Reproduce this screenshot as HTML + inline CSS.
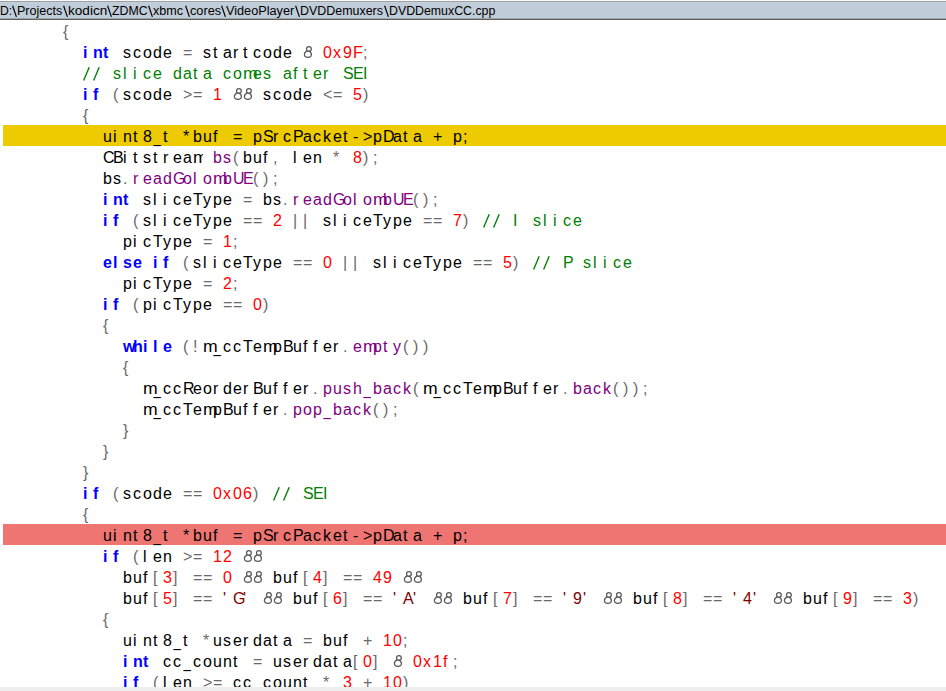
<!DOCTYPE html>
<html><head><meta charset="utf-8">
<style>
html,body{margin:0;padding:0;background:#fff;width:946px;height:691px;overflow:hidden;position:relative}
body{font-family:"Liberation Sans",sans-serif}
#tb{position:absolute;left:0;top:0;width:946px;height:20px;background:#c0ccd8}
#tb .r0{position:absolute;left:0;top:0;width:946px;height:1px;background:#f8f8f8}
#tb .r1{position:absolute;left:0;top:1px;width:946px;height:1px;background:#a0a0a0}
#tb .r2{position:absolute;left:0;top:2px;width:946px;height:1px;background:#c0d0de}
#tb .r17{position:absolute;left:0;top:17px;width:946px;height:1px;background:#c0d0de}
#tb .r18{position:absolute;left:0;top:18px;width:946px;height:1px;background:#a0a0a0}
#tb .r19{position:absolute;left:0;top:19px;width:946px;height:1px;background:#606060}
.ts{position:absolute;top:3px;font-size:12px;line-height:16px;color:#000;white-space:nowrap;transform-origin:0 0}
.bs{position:absolute;top:0}
.hl{position:absolute;left:3px;width:943px;height:21px}
.hl.hy{background:#eecb00}
.hl.hr{background:#ee7572}
.L{position:absolute;height:21px;white-space:nowrap;font-size:16px;line-height:21px;color:#000}
.L i{font-style:normal;display:inline-block;width:10px;height:21px;vertical-align:top}
.L i.sp{background:#fff;height:20px;position:relative}
.L.hy i.sp{background:#eecb00}
.L.hr i.sp{background:#ee7572}
.L i.u{position:relative;top:1px;transform:translateX(0.5px) scaleX(0.82);transform-origin:0 0}
.L b.m{display:inline-block;font-weight:inherit;transform:scaleX(1.1);transform-origin:0 0}
.k{color:#0000ff;font-weight:bold}
.n{color:#ff0000}
.o{color:#6a6a6a}
.L i.a{font-style:italic}
.L svg{display:block}
.c{color:#008000}
.f{color:#800080}
.s{color:#800000}
#bot{position:absolute;left:0;top:687px;width:946px;height:4px;background:#eeeeee}
</style></head><body>
<div id="tb"><div class="r0"></div><div class="r1"></div><div class="r2"></div><div class="r17"></div><div class="r18"></div><div class="r19"></div>
</div>
<span class=ts style="left:-0.07px;transform:scaleX(1.0150)">D:</span><span class=ts style="left:17.05px;transform:scaleX(1.0452)">Projects</span><span class=ts style="left:67.87px;transform:scaleX(1.1333)">kodicn</span><span class=ts style="left:112.30px;transform:scaleX(1.0265)">ZDMC</span><span class=ts style="left:153.20px;transform:scaleX(1.0483)">xbmc</span><span class=ts style="left:189.60px;transform:scaleX(1.0586)">cores</span><span class=ts style="left:226.00px;transform:scaleX(1.0569)">VideoPlayer</span><span class=ts style="left:300.36px;transform:scaleX(1.0367)">DVDDemuxers</span><span class=ts style="left:388.97px;transform:scaleX(1.0284)">DVDDemuxCC.cpp</span><svg class=bs style="left:12.0px" width="7" height="20"><line x1="0.6" y1="5.8" x2="4.4" y2="16.9" stroke="#000" stroke-width="1.2"/></svg><svg class=bs style="left:62.9px" width="7" height="20"><line x1="0.6" y1="5.8" x2="4.4" y2="16.9" stroke="#000" stroke-width="1.2"/></svg><svg class=bs style="left:107.0px" width="7" height="20"><line x1="0.6" y1="5.8" x2="4.4" y2="16.9" stroke="#000" stroke-width="1.2"/></svg><svg class=bs style="left:147.8px" width="7" height="20"><line x1="0.6" y1="5.8" x2="4.4" y2="16.9" stroke="#000" stroke-width="1.2"/></svg><svg class=bs style="left:184.6px" width="7" height="20"><line x1="0.6" y1="5.8" x2="4.4" y2="16.9" stroke="#000" stroke-width="1.2"/></svg><svg class=bs style="left:220.9px" width="7" height="20"><line x1="0.6" y1="5.8" x2="4.4" y2="16.9" stroke="#000" stroke-width="1.2"/></svg><svg class=bs style="left:295.0px" width="7" height="20"><line x1="0.6" y1="5.8" x2="4.4" y2="16.9" stroke="#000" stroke-width="1.2"/></svg><svg class=bs style="left:383.6px" width="7" height="20"><line x1="0.6" y1="5.8" x2="4.4" y2="16.9" stroke="#000" stroke-width="1.2"/></svg>
<div class="L" style="top:21px;left:63px"><span class=o><i>{</i></span></div>
<div class="L" style="top:42px;left:83px"><span class=k><i>i</i><i>n</i><i>t</i></span><i class=sp>&nbsp;</i><i>s</i><i>c</i><i>o</i><i>d</i><i>e</i><i class=sp>&nbsp;</i><span class=o><i>=</i></span><i class=sp>&nbsp;</i><i>s</i><i>t</i><i>a</i><i>r</i><i>t</i><i>c</i><i>o</i><i>d</i><i>e</i><i class=sp>&nbsp;</i><span class=o><i><svg width="10" height="21"><g fill="none" stroke="#585858" stroke-width="1.25"><ellipse cx="5.9" cy="6.9" rx="2.4" ry="2.4"/><path d="M4.3 8.9 C2.2 9.6 1.4 10.8 1.4 12.6 C1.4 14.6 3 15.4 4.9 15.4 C6.9 15.4 8.4 14.6 8.4 12.6 C8.4 10.8 7.6 9.6 5.6 8.9"/></g></svg></i></span><i class=sp>&nbsp;</i><span class=n><i>0</i><i>x</i><i>9</i><i>F</i></span><span class=o><i>;</i></span></div>
<div class="L" style="top:63px;left:83px"><span class=c><i><svg width="10" height="21"><line x1="6.2" y1="4.2" x2="0.6" y2="17.6" stroke="currentColor" stroke-width="1.4"/></svg></i><i><svg width="10" height="21"><line x1="6.2" y1="4.2" x2="0.6" y2="17.6" stroke="currentColor" stroke-width="1.4"/></svg></i><i class=sp>&nbsp;</i><i>s</i><i>l</i><i>i</i><i>c</i><i>e</i><i class=sp>&nbsp;</i><i>d</i><i>a</i><i>t</i><i>a</i><i class=sp>&nbsp;</i><i>c</i><i>o</i><i><b class=m>m</b></i><i>e</i><i>s</i><i class=sp>&nbsp;</i><i>a</i><i>f</i><i>t</i><i>e</i><i>r</i><i class=sp>&nbsp;</i><i>S</i><i>E</i><i>I</i></span></div>
<div class="L" style="top:84px;left:83px"><span class=k><i>i</i><i>f</i></span><i class=sp>&nbsp;</i><span class=o><i>(</i></span><i>s</i><i>c</i><i>o</i><i>d</i><i>e</i><i class=sp>&nbsp;</i><span class=o><i>&gt;</i><i>=</i></span><i class=sp>&nbsp;</i><span class=n><i>1</i></span><i class=sp>&nbsp;</i><span class=o><i><svg width="10" height="21"><g fill="none" stroke="#585858" stroke-width="1.25"><ellipse cx="5.9" cy="6.9" rx="2.4" ry="2.4"/><path d="M4.3 8.9 C2.2 9.6 1.4 10.8 1.4 12.6 C1.4 14.6 3 15.4 4.9 15.4 C6.9 15.4 8.4 14.6 8.4 12.6 C8.4 10.8 7.6 9.6 5.6 8.9"/></g></svg></i><i><svg width="10" height="21"><g fill="none" stroke="#585858" stroke-width="1.25"><ellipse cx="5.9" cy="6.9" rx="2.4" ry="2.4"/><path d="M4.3 8.9 C2.2 9.6 1.4 10.8 1.4 12.6 C1.4 14.6 3 15.4 4.9 15.4 C6.9 15.4 8.4 14.6 8.4 12.6 C8.4 10.8 7.6 9.6 5.6 8.9"/></g></svg></i></span><i class=sp>&nbsp;</i><i>s</i><i>c</i><i>o</i><i>d</i><i>e</i><i class=sp>&nbsp;</i><span class=o><i>&lt;</i><i>=</i></span><i class=sp>&nbsp;</i><span class=n><i>5</i></span><span class=o><i>)</i></span></div>
<div class="L" style="top:105px;left:83px"><span class=o><i>{</i></span></div>
<div class="hl hy" style="top:125px"></div>
<div class="L hy" style="top:126px;left:103px"><i>u</i><i>i</i><i>n</i><i>t</i><i>8</i><i class=u>_</i><i>t</i><i class=sp>&nbsp;</i><i>*</i><i>b</i><i>u</i><i>f</i><i class=sp>&nbsp;</i><i>=</i><i class=sp>&nbsp;</i><i>p</i><i>S</i><i>r</i><i>c</i><i>P</i><i>a</i><i>c</i><i>k</i><i>e</i><i>t</i><i>-</i><i>&gt;</i><i>p</i><i>D</i><i>a</i><i>t</i><i>a</i><i class=sp>&nbsp;</i><i>+</i><i class=sp>&nbsp;</i><i>p</i><i>;</i></div>
<div class="L" style="top:147px;left:103px"><i>C</i><i>B</i><i>i</i><i>t</i><i>s</i><i>t</i><i>r</i><i>e</i><i>a</i><i><b class=m>m</b></i><i class=sp>&nbsp;</i><span class=f><i>b</i><i>s</i></span><span class=o><i>(</i></span><i>b</i><i>u</i><i>f</i><span class=o><i>,</i></span><i class=sp>&nbsp;</i><i>l</i><i>e</i><i>n</i><i class=sp>&nbsp;</i><span class=o><i>*</i></span><i class=sp>&nbsp;</i><span class=n><i>8</i></span><span class=o><i>)</i><i>;</i></span></div>
<div class="L" style="top:168px;left:103px"><i>b</i><i>s</i><span class=o><i>.</i></span><span class=f><i>r</i><i>e</i><i>a</i><i>d</i><i>G</i><i>o</i><i>l</i><i>o</i><i><b class=m>m</b></i><i>b</i><i>U</i><i>E</i></span><span class=o><i>(</i><i>)</i><i>;</i></span></div>
<div class="L" style="top:189px;left:103px"><span class=k><i>i</i><i>n</i><i>t</i></span><i class=sp>&nbsp;</i><i>s</i><i>l</i><i>i</i><i>c</i><i>e</i><i>T</i><i>y</i><i>p</i><i>e</i><i class=sp>&nbsp;</i><span class=o><i>=</i></span><i class=sp>&nbsp;</i><i>b</i><i>s</i><span class=o><i>.</i></span><span class=f><i>r</i><i>e</i><i>a</i><i>d</i><i>G</i><i>o</i><i>l</i><i>o</i><i><b class=m>m</b></i><i>b</i><i>U</i><i>E</i></span><span class=o><i>(</i><i>)</i><i>;</i></span></div>
<div class="L" style="top:210px;left:103px"><span class=k><i>i</i><i>f</i></span><i class=sp>&nbsp;</i><span class=o><i>(</i></span><i>s</i><i>l</i><i>i</i><i>c</i><i>e</i><i>T</i><i>y</i><i>p</i><i>e</i><i class=sp>&nbsp;</i><span class=o><i>=</i><i>=</i></span><i class=sp>&nbsp;</i><span class=n><i>2</i></span><i class=sp>&nbsp;</i><span class=o><i>|</i><i>|</i></span><i class=sp>&nbsp;</i><i>s</i><i>l</i><i>i</i><i>c</i><i>e</i><i>T</i><i>y</i><i>p</i><i>e</i><i class=sp>&nbsp;</i><span class=o><i>=</i><i>=</i></span><i class=sp>&nbsp;</i><span class=n><i>7</i></span><span class=o><i>)</i></span><i class=sp>&nbsp;</i><span class=c><i><svg width="10" height="21"><line x1="6.2" y1="4.2" x2="0.6" y2="17.6" stroke="currentColor" stroke-width="1.4"/></svg></i><i><svg width="10" height="21"><line x1="6.2" y1="4.2" x2="0.6" y2="17.6" stroke="currentColor" stroke-width="1.4"/></svg></i><i class=sp>&nbsp;</i><i>I</i><i class=sp>&nbsp;</i><i>s</i><i>l</i><i>i</i><i>c</i><i>e</i></span></div>
<div class="L" style="top:231px;left:123px"><i>p</i><i>i</i><i>c</i><i>T</i><i>y</i><i>p</i><i>e</i><i class=sp>&nbsp;</i><span class=o><i>=</i></span><i class=sp>&nbsp;</i><span class=n><i>1</i></span><span class=o><i>;</i></span></div>
<div class="L" style="top:252px;left:103px"><span class=k><i>e</i><i>l</i><i>s</i><i>e</i><i class=sp>&nbsp;</i><i>i</i><i>f</i></span><i class=sp>&nbsp;</i><span class=o><i>(</i></span><i>s</i><i>l</i><i>i</i><i>c</i><i>e</i><i>T</i><i>y</i><i>p</i><i>e</i><i class=sp>&nbsp;</i><span class=o><i>=</i><i>=</i></span><i class=sp>&nbsp;</i><span class=n><i>0</i></span><i class=sp>&nbsp;</i><span class=o><i>|</i><i>|</i></span><i class=sp>&nbsp;</i><i>s</i><i>l</i><i>i</i><i>c</i><i>e</i><i>T</i><i>y</i><i>p</i><i>e</i><i class=sp>&nbsp;</i><span class=o><i>=</i><i>=</i></span><i class=sp>&nbsp;</i><span class=n><i>5</i></span><span class=o><i>)</i></span><i class=sp>&nbsp;</i><span class=c><i><svg width="10" height="21"><line x1="6.2" y1="4.2" x2="0.6" y2="17.6" stroke="currentColor" stroke-width="1.4"/></svg></i><i><svg width="10" height="21"><line x1="6.2" y1="4.2" x2="0.6" y2="17.6" stroke="currentColor" stroke-width="1.4"/></svg></i><i class=sp>&nbsp;</i><i>P</i><i class=sp>&nbsp;</i><i>s</i><i>l</i><i>i</i><i>c</i><i>e</i></span></div>
<div class="L" style="top:273px;left:123px"><i>p</i><i>i</i><i>c</i><i>T</i><i>y</i><i>p</i><i>e</i><i class=sp>&nbsp;</i><span class=o><i>=</i></span><i class=sp>&nbsp;</i><span class=n><i>2</i></span><span class=o><i>;</i></span></div>
<div class="L" style="top:294px;left:103px"><span class=k><i>i</i><i>f</i></span><i class=sp>&nbsp;</i><span class=o><i>(</i></span><i>p</i><i>i</i><i>c</i><i>T</i><i>y</i><i>p</i><i>e</i><i class=sp>&nbsp;</i><span class=o><i>=</i><i>=</i></span><i class=sp>&nbsp;</i><span class=n><i>0</i></span><span class=o><i>)</i></span></div>
<div class="L" style="top:315px;left:103px"><span class=o><i>{</i></span></div>
<div class="L" style="top:336px;left:123px"><span class=k><i>w</i><i>h</i><i>i</i><i>l</i><i>e</i></span><i class=sp>&nbsp;</i><span class=o><i>(</i><i>!</i></span><i><b class=m>m</b></i><i class=u>_</i><i>c</i><i>c</i><i>T</i><i>e</i><i><b class=m>m</b></i><i>p</i><i>B</i><i>u</i><i>f</i><i>f</i><i>e</i><i>r</i><span class=o><i>.</i></span><span class=f><i>e</i><i><b class=m>m</b></i><i>p</i><i>t</i><i>y</i></span><span class=o><i>(</i><i>)</i><i>)</i></span></div>
<div class="L" style="top:357px;left:123px"><span class=o><i>{</i></span></div>
<div class="L" style="top:378px;left:143px"><i><b class=m>m</b></i><i class=u>_</i><i>c</i><i>c</i><i>R</i><i>e</i><i>o</i><i>r</i><i>d</i><i>e</i><i>r</i><i>B</i><i>u</i><i>f</i><i>f</i><i>e</i><i>r</i><span class=o><i>.</i></span><span class=f><i>p</i><i>u</i><i>s</i><i>h</i><i class=u>_</i><i>b</i><i>a</i><i>c</i><i>k</i></span><span class=o><i>(</i></span><i><b class=m>m</b></i><i class=u>_</i><i>c</i><i>c</i><i>T</i><i>e</i><i><b class=m>m</b></i><i>p</i><i>B</i><i>u</i><i>f</i><i>f</i><i>e</i><i>r</i><span class=o><i>.</i></span><span class=f><i>b</i><i>a</i><i>c</i><i>k</i></span><span class=o><i>(</i><i>)</i><i>)</i><i>;</i></span></div>
<div class="L" style="top:399px;left:143px"><i><b class=m>m</b></i><i class=u>_</i><i>c</i><i>c</i><i>T</i><i>e</i><i><b class=m>m</b></i><i>p</i><i>B</i><i>u</i><i>f</i><i>f</i><i>e</i><i>r</i><span class=o><i>.</i></span><span class=f><i>p</i><i>o</i><i>p</i><i class=u>_</i><i>b</i><i>a</i><i>c</i><i>k</i></span><span class=o><i>(</i><i>)</i><i>;</i></span></div>
<div class="L" style="top:420px;left:123px"><span class=o><i>}</i></span></div>
<div class="L" style="top:441px;left:103px"><span class=o><i>}</i></span></div>
<div class="L" style="top:462px;left:83px"><span class=o><i>}</i></span></div>
<div class="L" style="top:483px;left:83px"><span class=k><i>i</i><i>f</i></span><i class=sp>&nbsp;</i><span class=o><i>(</i></span><i>s</i><i>c</i><i>o</i><i>d</i><i>e</i><i class=sp>&nbsp;</i><span class=o><i>=</i><i>=</i></span><i class=sp>&nbsp;</i><span class=n><i>0</i><i>x</i><i>0</i><i>6</i></span><span class=o><i>)</i></span><i class=sp>&nbsp;</i><span class=c><i><svg width="10" height="21"><line x1="6.2" y1="4.2" x2="0.6" y2="17.6" stroke="currentColor" stroke-width="1.4"/></svg></i><i><svg width="10" height="21"><line x1="6.2" y1="4.2" x2="0.6" y2="17.6" stroke="currentColor" stroke-width="1.4"/></svg></i><i class=sp>&nbsp;</i><i>S</i><i>E</i><i>I</i></span></div>
<div class="L" style="top:504px;left:83px"><span class=o><i>{</i></span></div>
<div class="hl hr" style="top:524px"></div>
<div class="L hr" style="top:525px;left:103px"><i>u</i><i>i</i><i>n</i><i>t</i><i>8</i><i class=u>_</i><i>t</i><i class=sp>&nbsp;</i><i>*</i><i>b</i><i>u</i><i>f</i><i class=sp>&nbsp;</i><i>=</i><i class=sp>&nbsp;</i><i>p</i><i>S</i><i>r</i><i>c</i><i>P</i><i>a</i><i>c</i><i>k</i><i>e</i><i>t</i><i>-</i><i>&gt;</i><i>p</i><i>D</i><i>a</i><i>t</i><i>a</i><i class=sp>&nbsp;</i><i>+</i><i class=sp>&nbsp;</i><i>p</i><i>;</i></div>
<div class="L" style="top:546px;left:103px"><span class=k><i>i</i><i>f</i></span><i class=sp>&nbsp;</i><span class=o><i>(</i></span><i>l</i><i>e</i><i>n</i><i class=sp>&nbsp;</i><span class=o><i>&gt;</i><i>=</i></span><i class=sp>&nbsp;</i><span class=n><i>1</i><i>2</i></span><i class=sp>&nbsp;</i><span class=o><i><svg width="10" height="21"><g fill="none" stroke="#585858" stroke-width="1.25"><ellipse cx="5.9" cy="6.9" rx="2.4" ry="2.4"/><path d="M4.3 8.9 C2.2 9.6 1.4 10.8 1.4 12.6 C1.4 14.6 3 15.4 4.9 15.4 C6.9 15.4 8.4 14.6 8.4 12.6 C8.4 10.8 7.6 9.6 5.6 8.9"/></g></svg></i><i><svg width="10" height="21"><g fill="none" stroke="#585858" stroke-width="1.25"><ellipse cx="5.9" cy="6.9" rx="2.4" ry="2.4"/><path d="M4.3 8.9 C2.2 9.6 1.4 10.8 1.4 12.6 C1.4 14.6 3 15.4 4.9 15.4 C6.9 15.4 8.4 14.6 8.4 12.6 C8.4 10.8 7.6 9.6 5.6 8.9"/></g></svg></i></span></div>
<div class="L" style="top:567px;left:123px"><i>b</i><i>u</i><i>f</i><span class=o><i>[</i></span><span class=n><i>3</i></span><span class=o><i>]</i></span><i class=sp>&nbsp;</i><span class=o><i>=</i><i>=</i></span><i class=sp>&nbsp;</i><span class=n><i>0</i></span><i class=sp>&nbsp;</i><span class=o><i><svg width="10" height="21"><g fill="none" stroke="#585858" stroke-width="1.25"><ellipse cx="5.9" cy="6.9" rx="2.4" ry="2.4"/><path d="M4.3 8.9 C2.2 9.6 1.4 10.8 1.4 12.6 C1.4 14.6 3 15.4 4.9 15.4 C6.9 15.4 8.4 14.6 8.4 12.6 C8.4 10.8 7.6 9.6 5.6 8.9"/></g></svg></i><i><svg width="10" height="21"><g fill="none" stroke="#585858" stroke-width="1.25"><ellipse cx="5.9" cy="6.9" rx="2.4" ry="2.4"/><path d="M4.3 8.9 C2.2 9.6 1.4 10.8 1.4 12.6 C1.4 14.6 3 15.4 4.9 15.4 C6.9 15.4 8.4 14.6 8.4 12.6 C8.4 10.8 7.6 9.6 5.6 8.9"/></g></svg></i></span><i class=sp>&nbsp;</i><i>b</i><i>u</i><i>f</i><span class=o><i>[</i></span><span class=n><i>4</i></span><span class=o><i>]</i></span><i class=sp>&nbsp;</i><span class=o><i>=</i><i>=</i></span><i class=sp>&nbsp;</i><span class=n><i>4</i><i>9</i></span><i class=sp>&nbsp;</i><span class=o><i><svg width="10" height="21"><g fill="none" stroke="#585858" stroke-width="1.25"><ellipse cx="5.9" cy="6.9" rx="2.4" ry="2.4"/><path d="M4.3 8.9 C2.2 9.6 1.4 10.8 1.4 12.6 C1.4 14.6 3 15.4 4.9 15.4 C6.9 15.4 8.4 14.6 8.4 12.6 C8.4 10.8 7.6 9.6 5.6 8.9"/></g></svg></i><i><svg width="10" height="21"><g fill="none" stroke="#585858" stroke-width="1.25"><ellipse cx="5.9" cy="6.9" rx="2.4" ry="2.4"/><path d="M4.3 8.9 C2.2 9.6 1.4 10.8 1.4 12.6 C1.4 14.6 3 15.4 4.9 15.4 C6.9 15.4 8.4 14.6 8.4 12.6 C8.4 10.8 7.6 9.6 5.6 8.9"/></g></svg></i></span></div>
<div class="L" style="top:588px;left:123px"><i>b</i><i>u</i><i>f</i><span class=o><i>[</i></span><span class=n><i>5</i></span><span class=o><i>]</i></span><i class=sp>&nbsp;</i><span class=o><i>=</i><i>=</i></span><i class=sp>&nbsp;</i><span class=s><i>&#x27;</i><i>G</i><i>&#x27;</i></span><i class=sp>&nbsp;</i><span class=o><i><svg width="10" height="21"><g fill="none" stroke="#585858" stroke-width="1.25"><ellipse cx="5.9" cy="6.9" rx="2.4" ry="2.4"/><path d="M4.3 8.9 C2.2 9.6 1.4 10.8 1.4 12.6 C1.4 14.6 3 15.4 4.9 15.4 C6.9 15.4 8.4 14.6 8.4 12.6 C8.4 10.8 7.6 9.6 5.6 8.9"/></g></svg></i><i><svg width="10" height="21"><g fill="none" stroke="#585858" stroke-width="1.25"><ellipse cx="5.9" cy="6.9" rx="2.4" ry="2.4"/><path d="M4.3 8.9 C2.2 9.6 1.4 10.8 1.4 12.6 C1.4 14.6 3 15.4 4.9 15.4 C6.9 15.4 8.4 14.6 8.4 12.6 C8.4 10.8 7.6 9.6 5.6 8.9"/></g></svg></i></span><i class=sp>&nbsp;</i><i>b</i><i>u</i><i>f</i><span class=o><i>[</i></span><span class=n><i>6</i></span><span class=o><i>]</i></span><i class=sp>&nbsp;</i><span class=o><i>=</i><i>=</i></span><i class=sp>&nbsp;</i><span class=s><i>&#x27;</i><i>A</i><i>&#x27;</i></span><i class=sp>&nbsp;</i><span class=o><i><svg width="10" height="21"><g fill="none" stroke="#585858" stroke-width="1.25"><ellipse cx="5.9" cy="6.9" rx="2.4" ry="2.4"/><path d="M4.3 8.9 C2.2 9.6 1.4 10.8 1.4 12.6 C1.4 14.6 3 15.4 4.9 15.4 C6.9 15.4 8.4 14.6 8.4 12.6 C8.4 10.8 7.6 9.6 5.6 8.9"/></g></svg></i><i><svg width="10" height="21"><g fill="none" stroke="#585858" stroke-width="1.25"><ellipse cx="5.9" cy="6.9" rx="2.4" ry="2.4"/><path d="M4.3 8.9 C2.2 9.6 1.4 10.8 1.4 12.6 C1.4 14.6 3 15.4 4.9 15.4 C6.9 15.4 8.4 14.6 8.4 12.6 C8.4 10.8 7.6 9.6 5.6 8.9"/></g></svg></i></span><i class=sp>&nbsp;</i><i>b</i><i>u</i><i>f</i><span class=o><i>[</i></span><span class=n><i>7</i></span><span class=o><i>]</i></span><i class=sp>&nbsp;</i><span class=o><i>=</i><i>=</i></span><i class=sp>&nbsp;</i><span class=s><i>&#x27;</i><i>9</i><i>&#x27;</i></span><i class=sp>&nbsp;</i><span class=o><i><svg width="10" height="21"><g fill="none" stroke="#585858" stroke-width="1.25"><ellipse cx="5.9" cy="6.9" rx="2.4" ry="2.4"/><path d="M4.3 8.9 C2.2 9.6 1.4 10.8 1.4 12.6 C1.4 14.6 3 15.4 4.9 15.4 C6.9 15.4 8.4 14.6 8.4 12.6 C8.4 10.8 7.6 9.6 5.6 8.9"/></g></svg></i><i><svg width="10" height="21"><g fill="none" stroke="#585858" stroke-width="1.25"><ellipse cx="5.9" cy="6.9" rx="2.4" ry="2.4"/><path d="M4.3 8.9 C2.2 9.6 1.4 10.8 1.4 12.6 C1.4 14.6 3 15.4 4.9 15.4 C6.9 15.4 8.4 14.6 8.4 12.6 C8.4 10.8 7.6 9.6 5.6 8.9"/></g></svg></i></span><i class=sp>&nbsp;</i><i>b</i><i>u</i><i>f</i><span class=o><i>[</i></span><span class=n><i>8</i></span><span class=o><i>]</i></span><i class=sp>&nbsp;</i><span class=o><i>=</i><i>=</i></span><i class=sp>&nbsp;</i><span class=s><i>&#x27;</i><i>4</i><i>&#x27;</i></span><i class=sp>&nbsp;</i><span class=o><i><svg width="10" height="21"><g fill="none" stroke="#585858" stroke-width="1.25"><ellipse cx="5.9" cy="6.9" rx="2.4" ry="2.4"/><path d="M4.3 8.9 C2.2 9.6 1.4 10.8 1.4 12.6 C1.4 14.6 3 15.4 4.9 15.4 C6.9 15.4 8.4 14.6 8.4 12.6 C8.4 10.8 7.6 9.6 5.6 8.9"/></g></svg></i><i><svg width="10" height="21"><g fill="none" stroke="#585858" stroke-width="1.25"><ellipse cx="5.9" cy="6.9" rx="2.4" ry="2.4"/><path d="M4.3 8.9 C2.2 9.6 1.4 10.8 1.4 12.6 C1.4 14.6 3 15.4 4.9 15.4 C6.9 15.4 8.4 14.6 8.4 12.6 C8.4 10.8 7.6 9.6 5.6 8.9"/></g></svg></i></span><i class=sp>&nbsp;</i><i>b</i><i>u</i><i>f</i><span class=o><i>[</i></span><span class=n><i>9</i></span><span class=o><i>]</i></span><i class=sp>&nbsp;</i><span class=o><i>=</i><i>=</i></span><i class=sp>&nbsp;</i><span class=n><i>3</i></span><span class=o><i>)</i></span></div>
<div class="L" style="top:609px;left:103px"><span class=o><i>{</i></span></div>
<div class="L" style="top:630px;left:123px"><i>u</i><i>i</i><i>n</i><i>t</i><i>8</i><i class=u>_</i><i>t</i><i class=sp>&nbsp;</i><span class=o><i>*</i></span><i>u</i><i>s</i><i>e</i><i>r</i><i>d</i><i>a</i><i>t</i><i>a</i><i class=sp>&nbsp;</i><span class=o><i>=</i></span><i class=sp>&nbsp;</i><i>b</i><i>u</i><i>f</i><i class=sp>&nbsp;</i><span class=o><i>+</i></span><i class=sp>&nbsp;</i><span class=n><i>1</i><i>0</i></span><span class=o><i>;</i></span></div>
<div class="L" style="top:651px;left:123px"><span class=k><i>i</i><i>n</i><i>t</i></span><i class=sp>&nbsp;</i><i>c</i><i>c</i><i class=u>_</i><i>c</i><i>o</i><i>u</i><i>n</i><i>t</i><i class=sp>&nbsp;</i><span class=o><i>=</i></span><i class=sp>&nbsp;</i><i>u</i><i>s</i><i>e</i><i>r</i><i>d</i><i>a</i><i>t</i><i>a</i><span class=o><i>[</i></span><span class=n><i>0</i></span><span class=o><i>]</i></span><i class=sp>&nbsp;</i><span class=o><i><svg width="10" height="21"><g fill="none" stroke="#585858" stroke-width="1.25"><ellipse cx="5.9" cy="6.9" rx="2.4" ry="2.4"/><path d="M4.3 8.9 C2.2 9.6 1.4 10.8 1.4 12.6 C1.4 14.6 3 15.4 4.9 15.4 C6.9 15.4 8.4 14.6 8.4 12.6 C8.4 10.8 7.6 9.6 5.6 8.9"/></g></svg></i></span><i class=sp>&nbsp;</i><span class=n><i>0</i><i>x</i><i>1</i><i>f</i></span><span class=o><i>;</i></span></div>
<div class="L" style="top:672px;left:123px"><span class=k><i>i</i><i>f</i></span><i class=sp>&nbsp;</i><span class=o><i>(</i></span><i>l</i><i>e</i><i>n</i><i class=sp>&nbsp;</i><span class=o><i>&gt;</i><i>=</i></span><i class=sp>&nbsp;</i><i>c</i><i>c</i><i class=u>_</i><i>c</i><i>o</i><i>u</i><i>n</i><i>t</i><i class=sp>&nbsp;</i><span class=o><i>*</i></span><i class=sp>&nbsp;</i><span class=n><i>3</i></span><i class=sp>&nbsp;</i><span class=o><i>+</i></span><i class=sp>&nbsp;</i><span class=n><i>1</i><i>0</i></span><span class=o><i>)</i></span></div>
<div id="bot"></div>
</body></html>
